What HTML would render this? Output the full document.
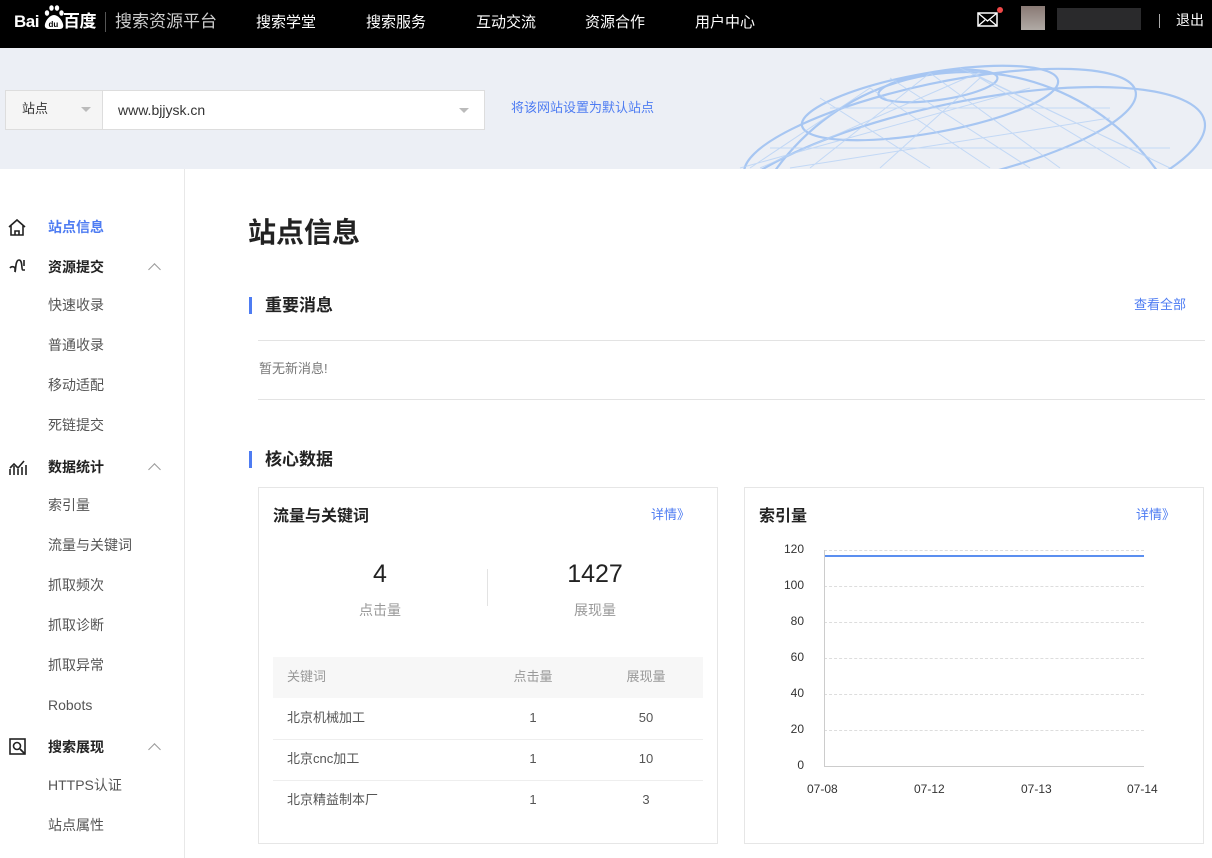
<!DOCTYPE html>
<html><head><meta charset="utf-8"><style>
*{margin:0;padding:0;box-sizing:border-box}
body{width:1212px;height:858px;overflow:hidden;font-family:"Liberation Sans","Noto Sans CJK SC",sans-serif;background:#fff;position:relative;color:#333}
.a{position:absolute;white-space:nowrap;line-height:1.45}
.top{position:absolute;left:0;top:0;width:1212px;height:48px;background:#000}
.nav{color:#fff;font-size:15px;top:12px}
.ban{position:absolute;left:0;top:48px;width:1212px;height:121px;background:#eceff5;overflow:hidden}
.side{position:absolute;left:184px;top:169px;width:1px;height:689px;background:#e8e8e8}
.si{font-size:14px;color:#555;left:48px}
.sh{font-size:14px;color:#222;font-weight:bold;left:48px}
.car{left:150px;width:9px;height:9px;border-left:1.5px solid #999;border-top:1.5px solid #999;transform:rotate(45deg)}
.card{position:absolute;border:1px solid #e6e6e6;background:#fff}
.grid{position:absolute;left:824px;width:320px;border-top:1px dashed #ddd}
.yl{font-size:12px;color:#333;width:40px;text-align:right;left:764px;line-height:1.2}
.xl{font-size:12px;color:#333}
</style></head><body>
<div class="top"></div>
<div class="a" style="left:14px;top:10px;color:#fff;font-size:17px;font-weight:bold;letter-spacing:-0.5px">Bai<span style="display:inline-block;width:24px"></span>百度</div>
<svg class="a" style="left:42px;top:3px" width="24" height="28" viewBox="0 0 24 28"><g fill="#fff"><ellipse cx="5" cy="10" rx="2.2" ry="2.8"/><ellipse cx="9.5" cy="5" rx="2.2" ry="2.8"/><ellipse cx="15" cy="5" rx="2.2" ry="2.8"/><ellipse cx="19.5" cy="10" rx="2.2" ry="2.8"/><path d="M12 12c-4 0-8 5-9 9s2 5 4 5h10c3 0 5-1 4-5s-5-9-9-9z"/></g><text x="6.5" y="24" font-size="8" fill="#000" font-family="Liberation Sans" font-weight="bold">du</text></svg>
<div class="a" style="left:105px;top:12px;width:1px;height:20px;background:#555"></div>
<div class="a" style="left:115px;top:10px;color:#ccc;font-size:17px">搜索资源平台</div>
<div class="a nav" style="left:256px">搜索学堂</div>
<div class="a nav" style="left:366px">搜索服务</div>
<div class="a nav" style="left:476px">互动交流</div>
<div class="a nav" style="left:585px">资源合作</div>
<div class="a nav" style="left:695px">用户中心</div>
<svg class="a" style="left:977px;top:12px" width="22" height="16"><rect x="1" y="1" width="19" height="13" fill="none" stroke="#fff" stroke-width="1.5"/><path d="M1 1l9.5 8 9.5-8M1 14l7-6M20 14l-7-6" fill="none" stroke="#fff" stroke-width="1.3"/></svg>
<div class="a" style="left:997px;top:7px;width:6px;height:6px;border-radius:50%;background:#f04848"></div>
<div class="a" style="left:1021px;top:6px;width:24px;height:24px;background:linear-gradient(#8a7a75,#b0aaa5)"></div>
<div class="a" style="left:1057px;top:8px;width:84px;height:22px;background:#2a2a2c"></div>
<div class="a" style="left:1159px;top:14px;width:1px;height:14px;background:#aaa"></div>
<div class="a" style="left:1176px;top:10px;color:#fff;font-size:14px">退出</div>
<div class="ban">
<svg style="position:absolute;left:730px;top:0" width="482" height="121" viewBox="0 0 482 121">
<g fill="none" stroke="#9cc0f2" stroke-width="2.2" opacity=".85">
<circle cx="236" cy="258" r="234"/>
<ellipse cx="208" cy="38" rx="60" ry="14" transform="rotate(-8 208 38)"/>
<ellipse cx="200" cy="55" rx="130" ry="30" transform="rotate(-10 200 55)"/>
<ellipse cx="210" cy="85" rx="200" ry="50" transform="rotate(-12 210 85)"/>
<ellipse cx="230" cy="125" rx="250" ry="70" transform="rotate(-12 230 125)"/>
</g>
<g fill="none" stroke="#b8d2f5" stroke-width="1" opacity=".8">
<path d="M20 120L140 40L260 120M80 120L200 25L330 120M150 120L250 30L400 120M10 120L300 40M60 120L380 70M200 120L90 50M300 120L160 30M420 110L230 20M40 100L440 100M100 60L380 60M30 120L250 24M440 120L240 24"/>
</g></svg>
</div>
<div class="a" style="left:5px;top:90px;width:480px;height:40px;border:1px solid #ddd;background:#fff"></div>
<div class="a" style="left:6px;top:91px;width:97px;height:38px;background:#f5f5f5;border-right:1px solid #ddd"></div>
<div class="a" style="left:22px;top:100px;font-size:13px;color:#333">站点</div>
<div class="a" style="left:81px;top:107px;border:5px solid transparent;border-top-color:#bbb"></div>
<div class="a" style="left:118px;top:100px;font-size:14px;color:#333">www.bjjysk.cn</div>
<div class="a" style="left:459px;top:108px;border:5px solid transparent;border-top-color:#bbb"></div>
<div class="a" style="left:511px;top:99px;font-size:13px;color:#4e7cf2">将该网站设置为默认站点</div>
<div class="side"></div>
<svg class="a" style="left:7px;top:218px" width="20" height="18"><path d="M2 9L10 2l8 7M4 7v10h12V7M8 17v-4h4v4" fill="none" stroke="#222" stroke-width="1.6"/></svg>
<div class="a" style="left:48px;top:217px;font-size:14px;font-weight:bold;color:#4e7cf2">站点信息</div>
<svg class="a" style="left:8px;top:256px" width="20" height="20"><path d="M2 12a3 3 0 0 1 5 0v4M7 16c1-1 0-12 4-12s2 10 4 10M16 4v6" fill="none" stroke="#222" stroke-width="1.6"/><circle cx="16" cy="14" r="1" fill="#222"/></svg>
<div class="a sh" style="top:257px">资源提交</div><div class="a car" style="top:265px"></div>
<div class="a si" style="top:295px">快速收录</div>
<div class="a si" style="top:335px">普通收录</div>
<div class="a si" style="top:375px">移动适配</div>
<div class="a si" style="top:415px">死链提交</div>
<svg class="a" style="left:8px;top:457px" width="20" height="20"><path d="M2 18v-6M6 18v-9M10 18v-6M14 18v-8M18 18v-10M2 11l4-4 4 4 6-7" fill="none" stroke="#222" stroke-width="1.6"/></svg>
<div class="a sh" style="top:457px">数据统计</div><div class="a car" style="top:465px"></div>
<div class="a si" style="top:495px">索引量</div>
<div class="a si" style="top:535px">流量与关键词</div>
<div class="a si" style="top:575px">抓取频次</div>
<div class="a si" style="top:615px">抓取诊断</div>
<div class="a si" style="top:655px">抓取异常</div>
<div class="a si" style="top:695px">Robots</div>
<svg class="a" style="left:8px;top:737px" width="20" height="20"><rect x="2" y="2" width="15" height="15" fill="none" stroke="#222" stroke-width="1.6"/><circle cx="9" cy="9" r="3.5" fill="none" stroke="#222" stroke-width="1.6"/><path d="M12 12l5 5" stroke="#222" stroke-width="1.8"/></svg>
<div class="a sh" style="top:737px">搜索展现</div><div class="a car" style="top:745px"></div>
<div class="a si" style="top:775px">HTTPS认证</div>
<div class="a si" style="top:815px">站点属性</div>

<div class="a" style="left:248px;top:213px;font-size:28px;font-weight:bold;color:#222">站点信息</div>
<div class="a" style="left:249px;top:297px;width:3px;height:17px;background:#4e7cf2"></div>
<div class="a" style="left:265px;top:294px;font-size:17px;font-weight:bold;color:#222">重要消息</div>
<div class="a" style="left:1134px;top:296px;font-size:13px;color:#4e7cf2">查看全部</div>
<div class="a" style="left:258px;top:340px;width:947px;height:1px;background:#e3e3e3"></div>
<div class="a" style="left:259px;top:360px;font-size:13px;color:#777">暂无新消息!</div>
<div class="a" style="left:258px;top:399px;width:947px;height:1px;background:#e3e3e3"></div>
<div class="a" style="left:249px;top:451px;width:3px;height:17px;background:#4e7cf2"></div>
<div class="a" style="left:265px;top:448px;font-size:17px;font-weight:bold;color:#222">核心数据</div>

<div class="card" style="left:258px;top:487px;width:460px;height:357px"></div>
<div class="a" style="left:273px;top:505px;font-size:16px;font-weight:bold;color:#222">流量与关键词</div>
<div class="a" style="left:651px;top:506px;font-size:13px;color:#4e7cf2">详情》</div>
<div class="a" style="left:340px;top:559px;width:80px;text-align:center;font-size:25px;color:#222;line-height:1.2">4</div>
<div class="a" style="left:340px;top:600px;width:80px;text-align:center;font-size:14px;color:#999">点击量</div>
<div class="a" style="left:487px;top:569px;width:1px;height:37px;background:#e3e3e3"></div>
<div class="a" style="left:545px;top:559px;width:100px;text-align:center;font-size:25px;color:#222;line-height:1.2">1427</div>
<div class="a" style="left:545px;top:600px;width:100px;text-align:center;font-size:14px;color:#999">展现量</div>
<div class="a" style="left:273px;top:657px;width:430px;height:41px;background:#f7f7f7"></div>
<div class="a" style="left:287px;top:668px;font-size:13px;color:#999">关键词</div>
<div class="a" style="left:503px;top:668px;width:60px;text-align:center;font-size:13px;color:#999">点击量</div>
<div class="a" style="left:616px;top:668px;width:60px;text-align:center;font-size:13px;color:#999">展现量</div>
<div class="a" style="left:273px;top:739px;width:430px;height:1px;background:#eee"></div>
<div class="a" style="left:273px;top:780px;width:430px;height:1px;background:#eee"></div>
<div class="a" style="left:287px;top:709px;font-size:13px;color:#555">北京机械加工</div>
<div class="a" style="left:503px;top:709px;width:60px;text-align:center;font-size:13px;color:#555">1</div>
<div class="a" style="left:616px;top:709px;width:60px;text-align:center;font-size:13px;color:#555">50</div>
<div class="a" style="left:287px;top:750px;font-size:13px;color:#555">北京cnc加工</div>
<div class="a" style="left:503px;top:750px;width:60px;text-align:center;font-size:13px;color:#555">1</div>
<div class="a" style="left:616px;top:750px;width:60px;text-align:center;font-size:13px;color:#555">10</div>
<div class="a" style="left:287px;top:791px;font-size:13px;color:#555">北京精益制本厂</div>
<div class="a" style="left:503px;top:791px;width:60px;text-align:center;font-size:13px;color:#555">1</div>
<div class="a" style="left:616px;top:791px;width:60px;text-align:center;font-size:13px;color:#555">3</div>

<div class="card" style="left:744px;top:487px;width:460px;height:357px"></div>
<div class="a" style="left:759px;top:505px;font-size:16px;font-weight:bold;color:#222">索引量</div>
<div class="a" style="left:1136px;top:506px;font-size:13px;color:#4e7cf2">详情》</div>
<div class="grid" style="top:550px"></div>
<div class="grid" style="top:586px"></div>
<div class="grid" style="top:622px"></div>
<div class="grid" style="top:658px"></div>
<div class="grid" style="top:694px"></div>
<div class="grid" style="top:730px"></div>
<div class="a" style="left:824px;top:550px;width:1px;height:216px;background:#ccc"></div>
<div class="a" style="left:824px;top:766px;width:320px;height:1px;background:#ccc"></div>
<div class="a" style="left:825px;top:555px;width:319px;height:2px;background:#5b8ff0"></div>
<div class="a yl" style="top:542px">120</div>
<div class="a yl" style="top:578px">100</div>
<div class="a yl" style="top:614px">80</div>
<div class="a yl" style="top:650px">60</div>
<div class="a yl" style="top:686px">40</div>
<div class="a yl" style="top:722px">20</div>
<div class="a yl" style="top:758px">0</div>
<div class="a xl" style="left:807px;top:781px">07-08</div>
<div class="a xl" style="left:914px;top:781px">07-12</div>
<div class="a xl" style="left:1021px;top:781px">07-13</div>
<div class="a xl" style="left:1127px;top:781px">07-14</div>
</body></html>
